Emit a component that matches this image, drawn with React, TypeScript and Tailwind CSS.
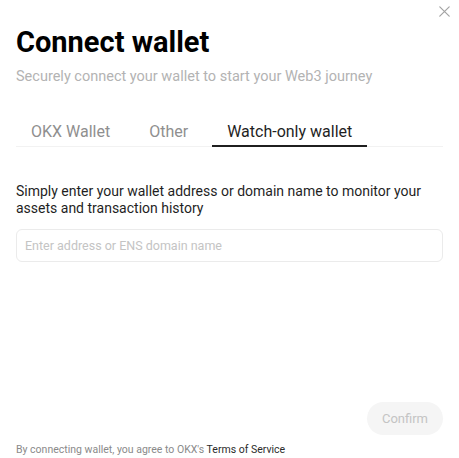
import React, { useState } from "react";

const tabs = ["OKX Wallet", "Other", "Watch-only wallet"];

const CloseIcon = () => (
  <svg width="11" height="11" viewBox="0 0 11 11" fill="none">
    <path d="M0.8 0.8l9.4 9.4M10.2 0.8L0.8 10.2" stroke="#a3a3a3" strokeWidth="1.2" strokeLinecap="round" />
  </svg>
);

const App = () => {
  const [active, setActive] = useState(2);
  const [address, setAddress] = useState("");

  return (
    <div className="relative flex h-[458px] w-[459px] flex-col bg-white px-4 font-['Roboto',sans-serif] text-[#1f1f1f]">
      <button className="absolute right-[9px] top-[6px] p-0">
        <CloseIcon />
      </button>

      <h1 className="mt-[25px] text-[29px] font-bold leading-[34px] text-black">
        Connect wallet
      </h1>
      <p className="mt-[8px] text-[14.5px] leading-5 text-[#b3b3b3]">
        Securely connect your wallet to start your Web3 journey
      </p>

      <div className="mt-[33px] flex gap-[9px] border-b border-[#f2f2f2]">
        {tabs.map((t, i) => (
          <button
            key={t}
            onClick={() => setActive(i)}
            className={
              i === active
                ? "-mb-px border-b-2 border-[#1f1f1f] px-[15px] pb-px text-[16px] leading-6 text-[#1f1f1f]"
                : "-mb-px border-b-2 border-transparent px-[15px] pb-px text-[16px] leading-6 text-[#8f8f8f]"
            }
          >
            {t}
          </button>
        ))}
      </div>

      <p className="mt-[36px] text-[14px] leading-[17px] text-[#1f1f1f]">
        Simply enter your wallet address or domain name to monitor your assets and transaction history
      </p>

      <input
        value={address}
        onChange={(e) => setAddress(e.target.value)}
        placeholder="Enter address or ENS domain name"
        className="mt-[12px] h-[33px] w-full rounded-[6px] border border-[#ebebeb] px-[8px] text-[12.5px] outline-none placeholder:text-[#c4c4c4]"
      />

      <div className="mt-auto flex justify-end">
        <button
          disabled={!address}
          className="h-[33px] w-[76px] rounded-full bg-[#f5f5f5] text-[13px] text-[#c4c4c4]"
        >
          Confirm
        </button>
      </div>

      <p className="mb-px mt-[8px] text-[10.5px] leading-[14px] text-[#8a8a8a]">
        By connecting wallet, you agree to OKX's{" "}
        <span className="text-[#2b2b2b]">Terms of Service</span>
      </p>
    </div>
  );
};

export default App;
